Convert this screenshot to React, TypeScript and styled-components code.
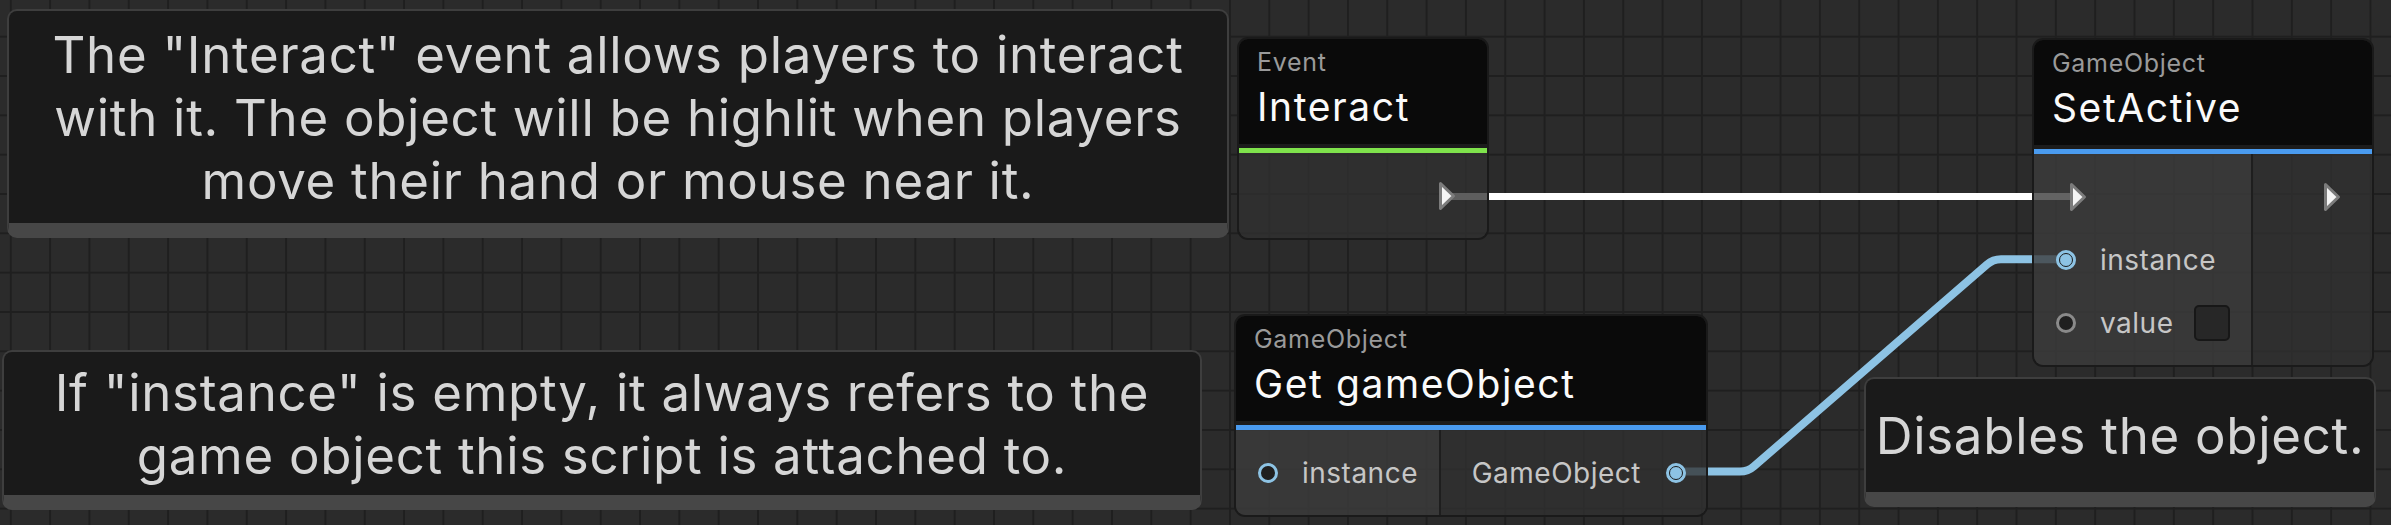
import React from "react";
import styled, { createGlobalStyle, css } from "styled-components";

const GlobalStyle = createGlobalStyle`
  html, body {
    margin: 0;
    padding: 0;
    background: #2b2b2b;
  }
  body {
    font-family: Inter, "Noto Sans", "Liberation Sans", sans-serif;
    -webkit-font-smoothing: antialiased;
  }
  * { box-sizing: border-box; }
`;

const Canvas = styled.div`
  position: relative;
  width: 2391px;
  height: 525px;
  overflow: hidden;
  background-color: #2b2b2b;
  background-image:
    linear-gradient(to right, #1f1f1f 2px, transparent 2px),
    linear-gradient(to bottom, #1f1f1f 2px, transparent 2px);
  background-size: 39.34px 39.34px;
  background-position: 9.8px 35.7px;
`;

type Place = { $x: number; $y: number; $w: number; $h?: number };

const Note = styled.div<Place>`
  position: absolute;
  z-index: 0;
  left: ${(p) => p.$x}px;
  top: ${(p) => p.$y}px;
  width: ${(p) => p.$w}px;
  height: ${(p) => p.$h}px;
  background: #1a1a1a;
  border: 2px solid #3e3e3e;
  border-bottom: 15px solid #474747;
  border-radius: 10px;
  display: flex;
  align-items: center;
  justify-content: center;
`;

const NoteText = styled.p`
  margin: 0;
  font-size: 51px;
  line-height: 63px;
  letter-spacing: 0.7px;
  color: #d6d6d6;
  text-align: center;
  white-space: pre;
`;

const Wires = styled.svg`
  position: absolute;
  left: 0;
  top: 0;
  z-index: 1;
  pointer-events: none;
`;

const NodeBox = styled.div<Place>`
  position: absolute;
  z-index: 2;
  left: ${(p) => p.$x}px;
  top: ${(p) => p.$y}px;
  width: ${(p) => p.$w}px;
  border: 2px solid #1a1a1a;
  border-radius: 11px;
  overflow: hidden;
  display: flex;
  flex-direction: column;
`;

const Header = styled.div`
  height: 109px;
  background: #0a0a0a;
  border-bottom: 4px solid #1c1c1c;
  padding: 8px 18px 0;
  display: flex;
  flex-direction: column;
`;

const Kind = styled.div`
  font-size: 25px;
  line-height: 30px;
  letter-spacing: 0.7px;
  color: #9a9a9a;
`;

const Title = styled.div`
  margin-top: 6px;
  font-size: 39px;
  line-height: 48px;
  letter-spacing: 1.6px;
  color: #fafafa;
`;

const Accent = styled.div<{ $color: string }>`
  height: 5px;
  background: ${(p) => p.$color};
`;

const Body = styled.div`
  display: flex;
  align-items: stretch;
`;

const Column = styled.div<{ $side: "in" | "out"; $w?: number }>`
  padding: 11px 0;
  display: flex;
  flex-direction: column;
  ${(p) =>
    p.$side === "in"
      ? css`
          flex: 0 0 ${p.$w}px;
          background: rgba(60, 60, 60, 0.8);
          border-right: 2px solid #1e1e1e;
        `
      : css`
          flex: 1 1 auto;
          background: rgba(49, 49, 49, 0.78);
        `}
`;

const Row = styled.div<{ $side: "in" | "out" }>`
  height: 63px;
  display: flex;
  align-items: center;
  ${(p) =>
    p.$side === "in"
      ? css`
          padding-left: 22px;
        `
      : css`
          justify-content: flex-end;
          padding-right: 20px;
        `}
`;

const Label = styled.span<{ $side: "in" | "out" }>`
  font-size: 28px;
  line-height: 34px;
  letter-spacing: 0.5px;
  color: #c6c6c6;
  ${(p) =>
    p.$side === "in"
      ? css`
          margin-left: 24px;
        `
      : css`
          margin-right: 25px;
        `}
`;

const Port = styled.span<{ $color: string; $linked?: boolean }>`
  position: relative;
  flex: 0 0 20px;
  width: 20px;
  height: 20px;
  border-radius: 50%;
  border: 3.5px solid ${(p) => p.$color};
  background: ${(p) => (p.$linked ? p.$color : "#1f1f1f")};
  ${(p) =>
    p.$linked &&
    css`
      &::after {
        content: "";
        position: absolute;
        left: 50%;
        top: 50%;
        width: 12px;
        height: 12px;
        transform: translate(-50%, -50%);
        border-radius: 50%;
        border: 1.5px solid #1c1c1c;
        background: ${p.$color};
      }
    `}
`;

const FlowSvg = styled.svg<{ $side: "in" | "out" }>`
  display: block;
  flex: 0 0 18px;
  ${(p) =>
    p.$side === "in"
      ? css`
          margin-left: 13px;
        `
      : css`
          margin-right: 11px;
        `}
`;

const Check = styled.span`
  width: 36px;
  height: 36px;
  margin-left: 21px;
  border-radius: 5px;
  background: #272727;
  border: 2px solid #171717;
`;

const Flow = ({ side }: { side: "in" | "out" }) => (
  <FlowSvg $side={side} width="18" height="32" viewBox="0 0 18 32">
    <polygon
      points="2.5,3.5 15.5,16 2.5,28.5"
      fill="#f5f5f5"
      stroke="#7c7c7c"
      strokeWidth="3"
      strokeLinejoin="round"
    />
  </FlowSvg>
);

const BLUE = "#8dc3e4";
const GRAY_PORT = "#8a8a8a";

export default function App() {
  return (
    <>
      <GlobalStyle />
      <Canvas>
        <Note $x={7} $y={9} $w={1222} $h={229}>
          <NoteText>
            {'The "Interact" event allows players to interact\nwith it. The object will be highlit when players\nmove their hand or mouse near it.'}
          </NoteText>
        </Note>
        <Note $x={2} $y={350} $w={1200} $h={160}>
          <NoteText>
            {'If "instance" is empty, it always refers to the\ngame object this script is attached to.'}
          </NoteText>
        </Note>
        <Note $x={1864} $y={377} $w={512} $h={130}>
          <NoteText>Disables the object.</NoteText>
        </Note>

        <Wires width="2391" height="525" viewBox="0 0 2391 525">
          <path d="M 1450 196.5 H 2078" stroke="#ffffff" strokeWidth="7" fill="none" />
          <path
            d="M 1676 471.5 H 1740 Q 1748 471.5 1754 466.2 L 1987 264.6 Q 1993 259.3 2001 259.3 H 2066"
            stroke={BLUE}
            strokeWidth="8"
            fill="none"
            strokeLinejoin="round"
          />
        </Wires>

        <NodeBox $x={1237} $y={37} $w={252}>
          <Header>
            <Kind>Event</Kind>
            <Title>Interact</Title>
          </Header>
          <Accent $color="#7fe34c" />
          <Body>
            <Column $side="out">
              <Row $side="out">
                <Flow side="out" />
              </Row>
            </Column>
          </Body>
        </NodeBox>

        <NodeBox $x={2032} $y={38} $w={342}>
          <Header>
            <Kind>GameObject</Kind>
            <Title>SetActive</Title>
          </Header>
          <Accent $color="#4a9bef" />
          <Body>
            <Column $side="in" $w={219}>
              <Row $side="in">
                <Flow side="in" />
              </Row>
              <Row $side="in">
                <Port $color={BLUE} $linked />
                <Label $side="in">instance</Label>
              </Row>
              <Row $side="in">
                <Port $color={GRAY_PORT} />
                <Label $side="in">value</Label>
                <Check />
              </Row>
            </Column>
            <Column $side="out">
              <Row $side="out">
                <Flow side="out" />
              </Row>
            </Column>
          </Body>
        </NodeBox>

        <NodeBox $x={1234} $y={314} $w={474}>
          <Header>
            <Kind>GameObject</Kind>
            <Title>Get gameObject</Title>
          </Header>
          <Accent $color="#4a9bef" />
          <Body>
            <Column $side="in" $w={205}>
              <Row $side="in">
                <Port $color={BLUE} />
                <Label $side="in">instance</Label>
              </Row>
            </Column>
            <Column $side="out">
              <Row $side="out">
                <Label $side="out">GameObject</Label>
                <Port $color={BLUE} $linked />
              </Row>
            </Column>
          </Body>
        </NodeBox>
      </Canvas>
    </>
  );
}
